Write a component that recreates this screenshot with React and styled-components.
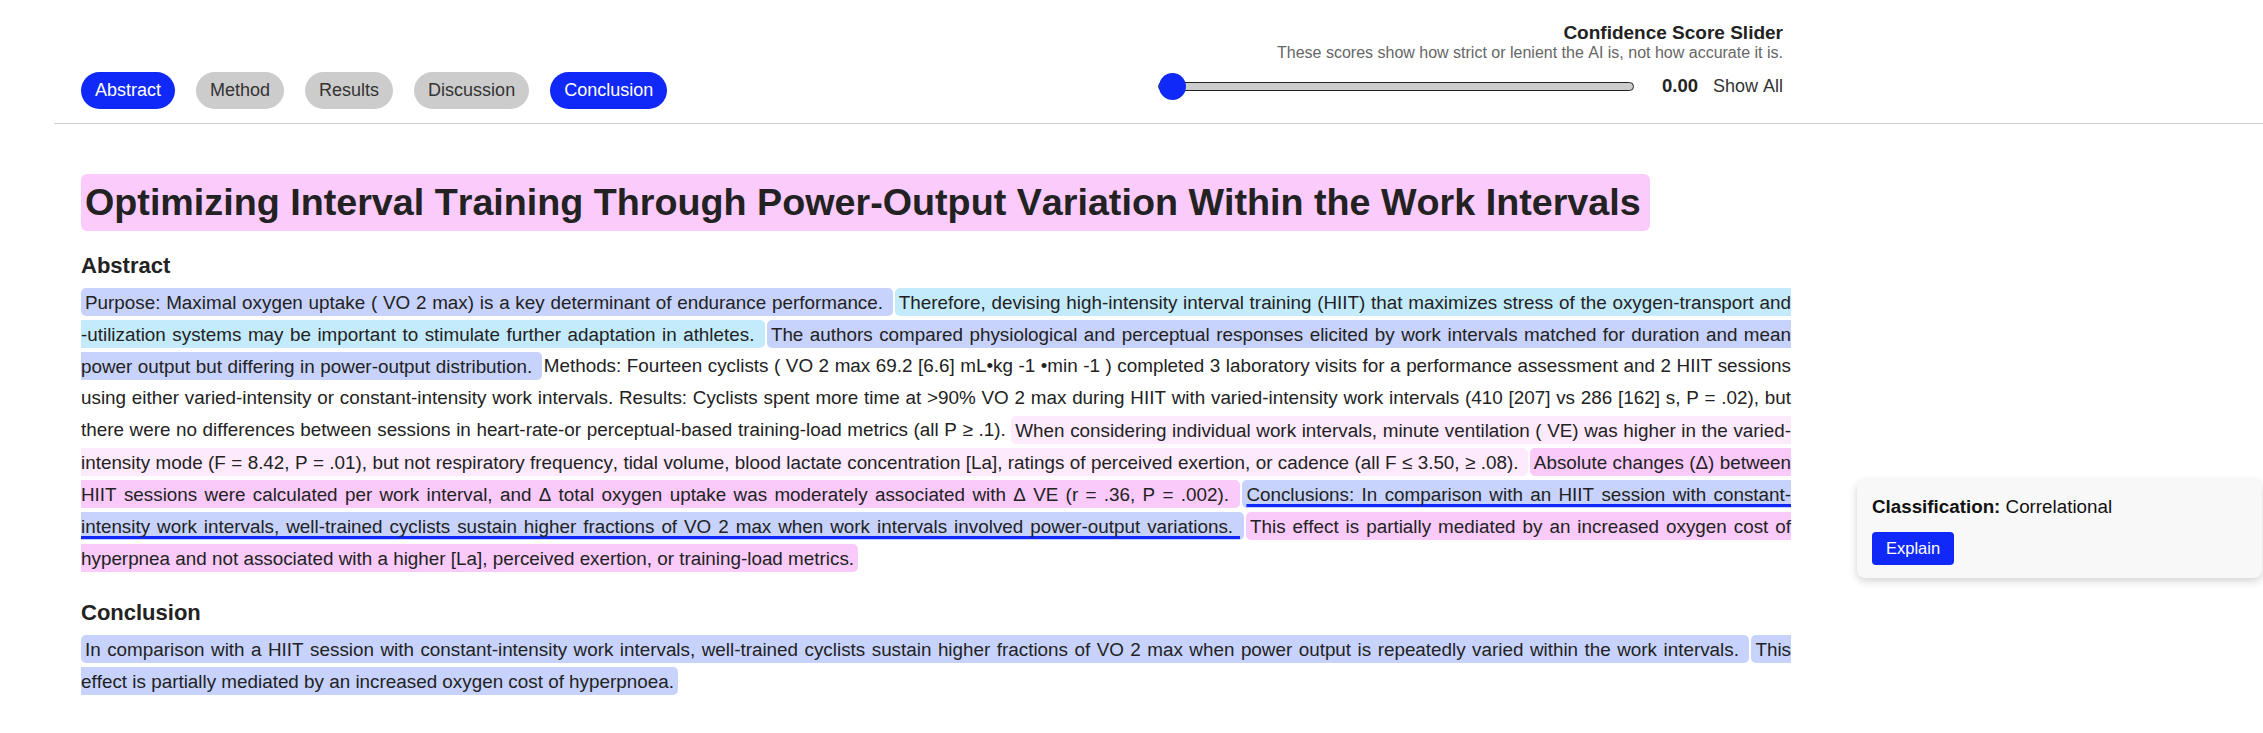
import React, { useState } from 'react';
import styled, { createGlobalStyle, css } from 'styled-components';

const tones = {
  lavender: '#c7d3fc',
  cyan: '#c4ebfc',
  blush: '#fdeafd',
  pink: '#f9cafa',
};

// \u2060 keeps "-utilization" together, as the source breaks before the dash
const abstractParts = [
  { text: 'Purpose: Maximal oxygen uptake ( VO 2 max) is a key determinant of endurance performance. ', tone: 'lavender' },
  { text: 'Therefore, devising high-intensity interval training (HIIT) that maximizes stress of the oxygen-transport and -\u2060utilization systems may be important to stimulate further adaptation in athletes. ', tone: 'cyan' },
  { text: 'The authors compared physiological and perceptual responses elicited by work intervals matched for duration and mean power output but differing in power-output distribution. ', tone: 'lavender' },
  { text: 'Methods: Fourteen cyclists ( VO 2 max 69.2 [6.6] mL•kg -1 •min -1 ) completed 3 laboratory visits for a performance assessment and 2 HIIT sessions using either varied-intensity or constant-intensity work intervals. Results: Cyclists spent more time at >90% VO 2 max during HIIT with varied-intensity work intervals (410 [207] vs 286 [162] s, P = .02), but there were no differences between sessions in heart-rate-or perceptual-based training-load metrics (all P ≥ .1). ' },
  { text: 'When considering individual work intervals, minute ventilation ( VE) was higher in the varied-intensity mode (F = 8.42, P = .01), but not respiratory frequency, tidal volume, blood lactate concentration [La], ratings of perceived exertion, or cadence (all F ≤ 3.50, ≥ .08). ', tone: 'blush' },
  { text: 'Absolute changes (Δ) between HIIT sessions were calculated per work interval, and Δ total oxygen uptake was moderately associated with Δ VE (r = .36, P = .002). ', tone: 'pink' },
  { text: 'Conclusions: In comparison with an HIIT session with constant-intensity work intervals, well-trained cyclists sustain higher fractions of VO 2 max when work intervals involved power-output variations. ', tone: 'lavender', picked: true },
  { text: 'This effect is partially mediated by an increased oxygen cost of hyperpnea and not associated with a higher [La], perceived exertion, or training-load metrics.', tone: 'pink' },
];

const conclusionParts = [
  { text: 'In comparison with a HIIT session with constant-intensity work intervals, well-trained cyclists sustain higher fractions of VO 2 max when power output is repeatedly varied within the work intervals. ', tone: 'lavender' },
  { text: 'This effect is partially mediated by an increased oxygen cost of hyperpnoea.', tone: 'lavender' },
];

const sections = ['Abstract', 'Method', 'Results', 'Discussion', 'Conclusion'];

function Passage({ parts }) {
  return (
    <Paragraph>
      {parts.map((part, i) =>
        part.tone ? (
          <Sentence key={i} $tone={part.tone} $picked={part.picked}>
            {part.text}
          </Sentence>
        ) : (
          <React.Fragment key={i}>{part.text}</React.Fragment>
        )
      )}
    </Paragraph>
  );
}

function App() {
  const [active, setActive] = useState(['Abstract', 'Conclusion']);
  const [score, setScore] = useState(0);

  const toggle = name => {
    setActive(prev =>
      prev.includes(name) ? prev.filter(n => n !== name) : [...prev, name]
    );
  };

  return (
    <>
      <GlobalStyle />
      <Header>
        <Bar>
          <Pills>
            {sections.map(name => (
              <Pill
                key={name}
                $on={active.includes(name)}
                onClick={() => toggle(name)}
              >
                {name}
              </Pill>
            ))}
          </Pills>
          <ScoreBlock>
            <ScoreTitle>Confidence Score Slider</ScoreTitle>
            <ScoreNote>
              These scores show how strict or lenient the AI is, not how
              accurate it is.
            </ScoreNote>
            <SliderRow>
              <Range
                min="0"
                max="1"
                step="0.01"
                value={score}
                onChange={e => setScore(Number(e.target.value))}
              />
              <ScoreValue>{score.toFixed(2)}</ScoreValue>
              <ShowAll>Show All</ShowAll>
            </SliderRow>
          </ScoreBlock>
        </Bar>
      </Header>
      <Layout>
        <Article>
          <Title>
            <TitleMark>
              Optimizing Interval Training Through Power-Output Variation
              Within the Work Intervals
            </TitleMark>
          </Title>
          <SectionHeading>Abstract</SectionHeading>
          <Passage parts={abstractParts} />
          <SectionHeading $gap="26px">Conclusion</SectionHeading>
          <Passage parts={conclusionParts} />
        </Article>
        <Aside>
          <Card>
            <CardLine>
              <strong>Classification:</strong> Correlational
            </CardLine>
            <ExplainButton>Explain</ExplainButton>
          </Card>
        </Aside>
      </Layout>
    </>
  );
}

const GlobalStyle = createGlobalStyle`
  body {
    margin: 0;
    background: #fff;
    color: #222;
    font-family: "Liberation Sans", Arial, sans-serif;
    font-kerning: none;
    font-variant-ligatures: none;
  }
  * {
    box-sizing: border-box;
  }
`;

const Header = styled.header`
  margin-left: 54px;
  border-bottom: 1px solid #cfcfcf;
`;

const Bar = styled.div`
  width: 1729px;
  display: flex;
  align-items: flex-start;
  justify-content: space-between;
  padding: 22px 0 14px 27px;
`;

const Pills = styled.nav`
  display: flex;
  gap: 21px;
  margin-top: 50px;
`;

const Pill = styled.button`
  border: none;
  border-radius: 20px;
  padding: 8px 14px;
  font-family: inherit;
  font-size: 18px;
  line-height: 21px;
  cursor: pointer;
  background: ${({ $on }) => ($on ? '#1029f8' : '#cccccc')};
  color: ${({ $on }) => ($on ? '#ffffff' : '#333333')};
`;

const ScoreBlock = styled.div`
  display: flex;
  flex-direction: column;
  align-items: flex-end;
`;

const ScoreTitle = styled.div`
  font-size: 19px;
  font-weight: bold;
  line-height: 22px;
  color: #222;
`;

const ScoreNote = styled.div`
  font-size: 16px;
  line-height: 18px;
  color: #666;
`;

const SliderRow = styled.div`
  display: flex;
  align-items: center;
  height: 28px;
  margin-top: 10px;
`;

const Range = styled.input.attrs({ type: 'range' })`
  -webkit-appearance: none;
  appearance: none;
  width: 476px;
  height: 9px;
  margin: 0;
  background: #cccccc;
  border: 1.5px solid #222;
  border-radius: 5px;
  outline: none;

  &::-webkit-slider-thumb {
    -webkit-appearance: none;
    appearance: none;
    width: 27px;
    height: 27px;
    border: none;
    border-radius: 50%;
    background: #1029f8;
    cursor: pointer;
  }
`;

const ScoreValue = styled.span`
  margin-left: 28px;
  font-size: 18.5px;
  font-weight: bold;
  color: #222;
`;

const ShowAll = styled.span`
  margin-left: 15px;
  font-size: 18px;
  color: #333;
  cursor: pointer;
`;

const Layout = styled.div`
  display: flex;
  align-items: flex-start;
`;

const Article = styled.main`
  width: 1710px;
  margin-left: 81px;
`;

const Title = styled.h1`
  margin: 56px 0 0;
  font-size: 37.7px;
  line-height: 44px;
  font-weight: bold;
  color: #222;
`;

const TitleMark = styled.span`
  background: #facbfb;
  padding: 7px 9px 8px 4px;
  border-radius: 6px;
`;

const SectionHeading = styled.h2`
  margin: ${({ $gap }) => $gap || '29px'} 0 0;
  font-size: 22px;
  line-height: 26px;
  font-weight: bold;
  color: #222;
`;

const Paragraph = styled.p`
  margin: 7px 0 0;
  font-size: 18.85px;
  line-height: 32px;
  text-align: justify;
  color: #222;
`;

const Sentence = styled.span`
  background: ${({ $tone }) => tones[$tone]};
  padding: 3.5px 4px;
  margin-right: 2px;
  border-radius: 5px;
  ${({ $picked }) =>
    $picked &&
    css`
      text-decoration: underline;
      text-decoration-color: #1029f8;
      text-decoration-thickness: 3px;
      text-underline-offset: 4px;
    `}
`;

const Aside = styled.aside`
  width: 405px;
  margin-left: 66px;
  padding-top: 356px;
`;

const Card = styled.div`
  background: #f8f8f8;
  border-radius: 8px;
  padding: 16px 15px 13px;
  box-shadow: 0 3px 8px rgba(0, 0, 0, 0.18);
`;

const CardLine = styled.div`
  font-size: 18.8px;
  line-height: 21px;
  color: #111;
`;

const ExplainButton = styled.button`
  display: block;
  margin-top: 15px;
  border: none;
  border-radius: 4px;
  padding: 7px 14px;
  font-family: inherit;
  font-size: 16.5px;
  line-height: 19px;
  background: #1029f8;
  color: #fff;
  cursor: pointer;
`;

export default App;
